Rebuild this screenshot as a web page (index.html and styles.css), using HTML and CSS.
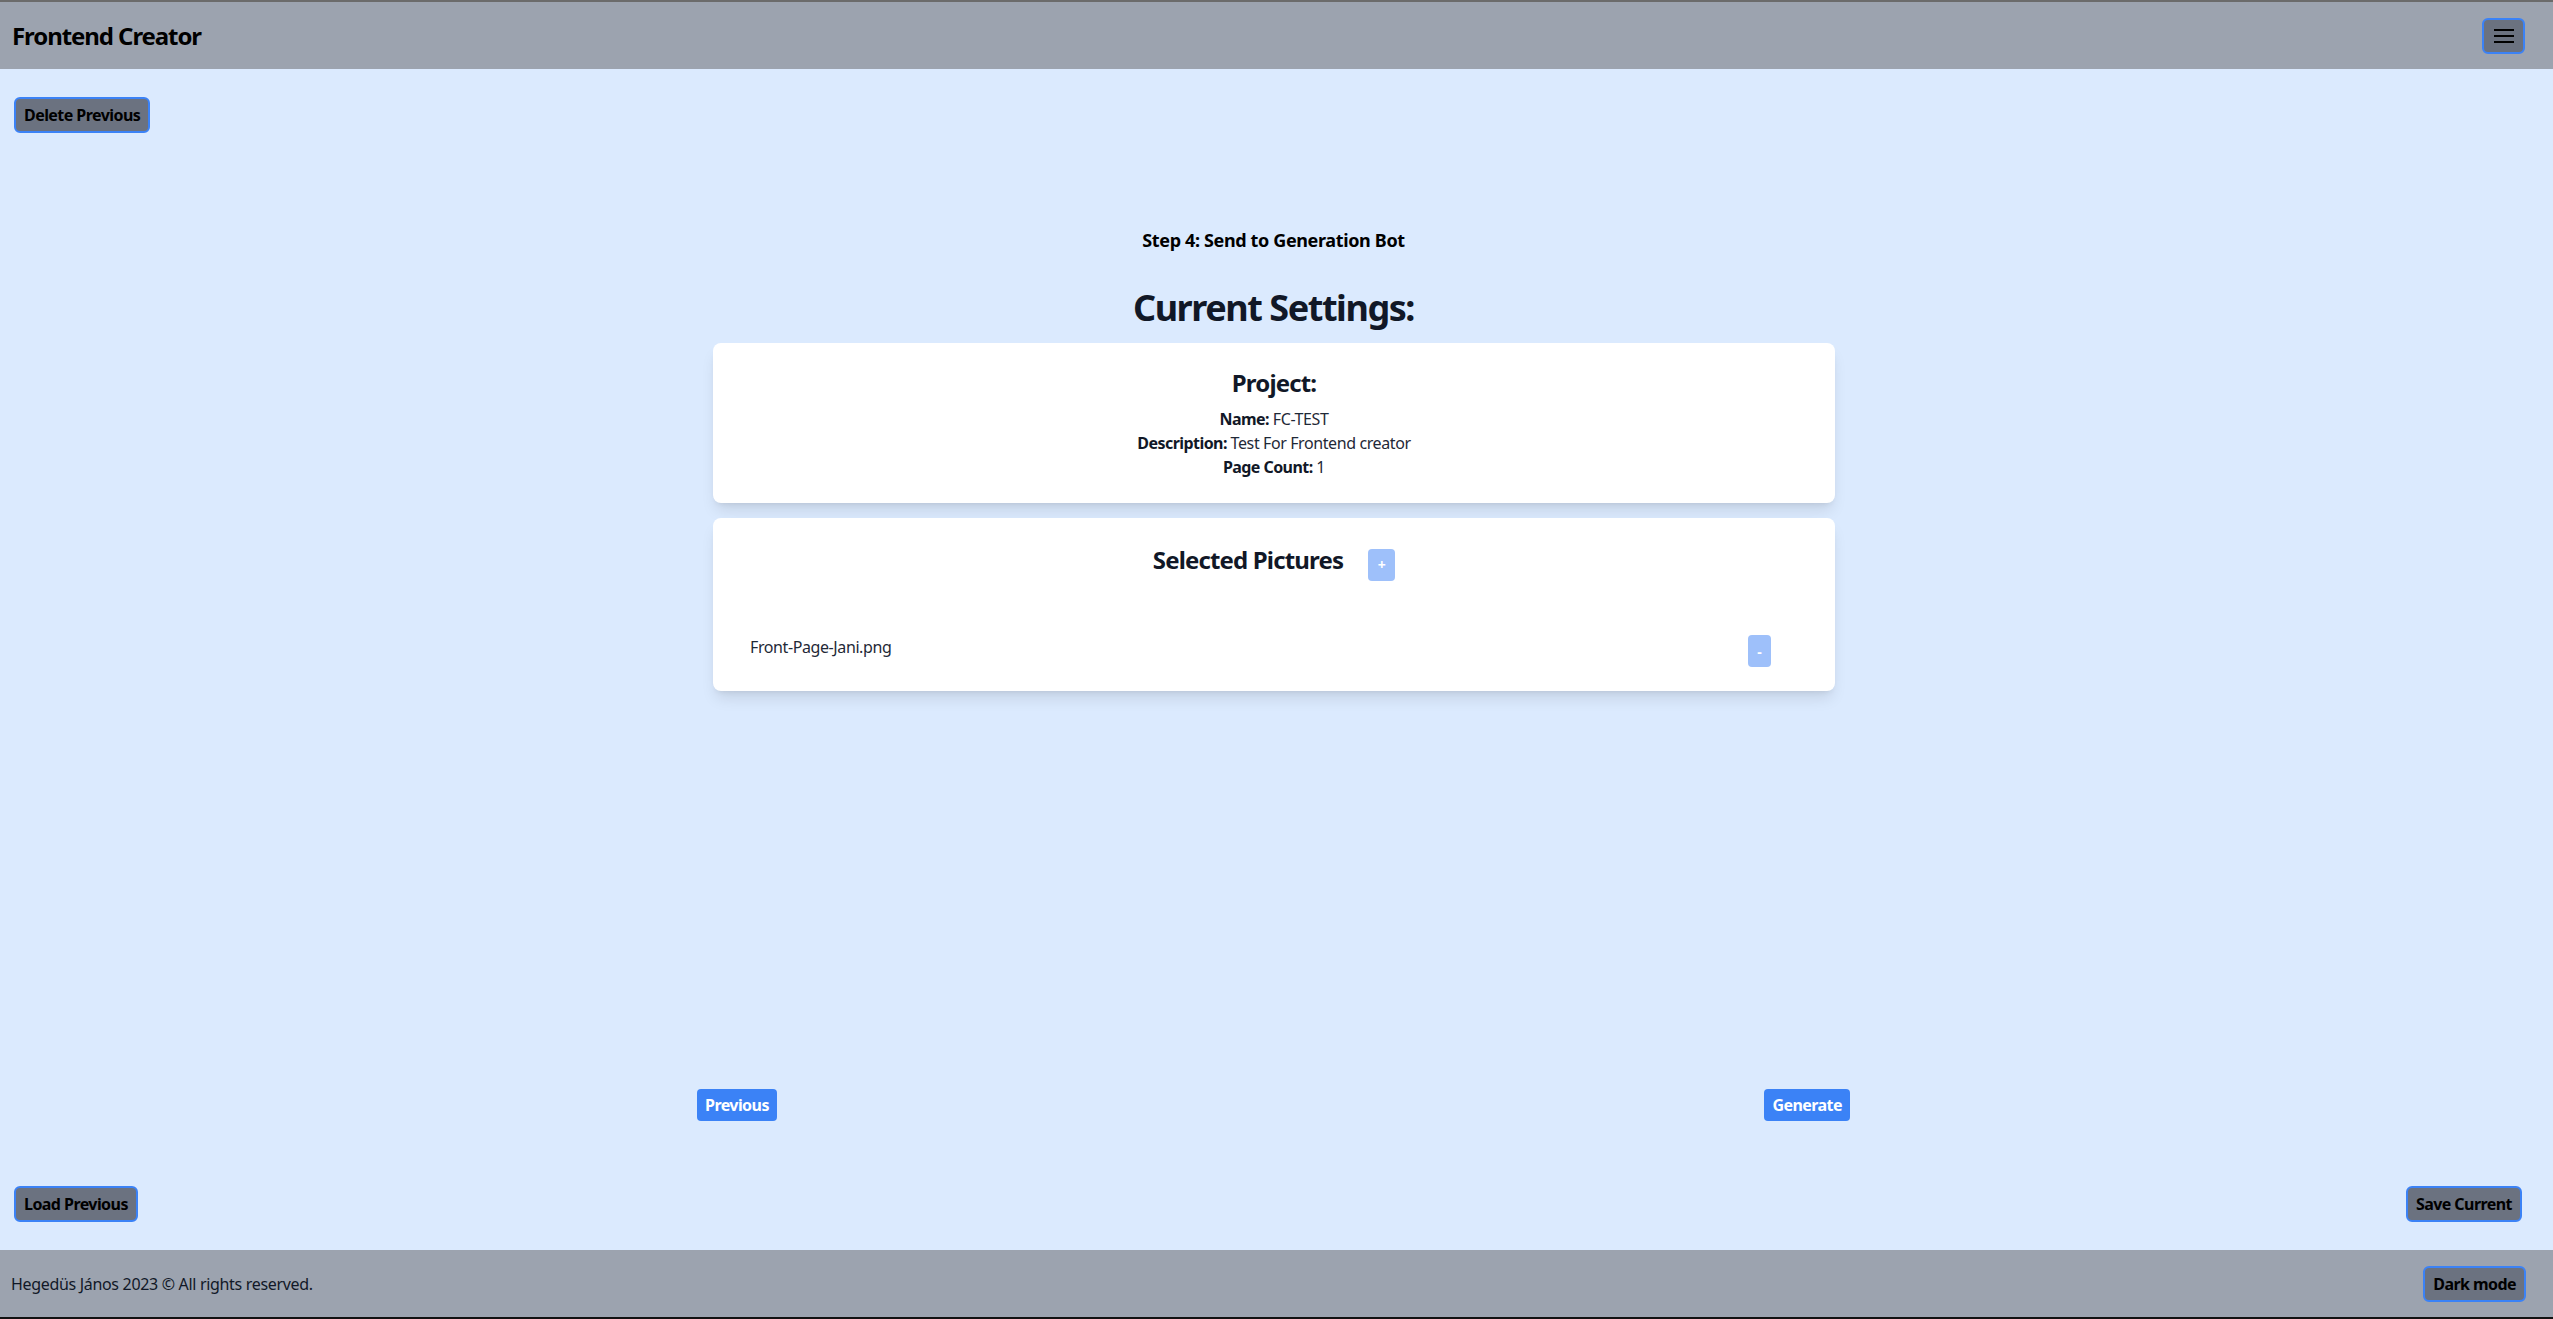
FILE: index.html
```html
<!DOCTYPE html>
<html lang="en">
<head>
<meta charset="utf-8">
<title>Frontend Creator</title>
<link rel="stylesheet" href="styles.css">
</head>
<body>
<header class="topbar">
  <h1 class="brand">Frontend Creator</h1>
  <button class="menu-btn" aria-label="Menu">
    <svg width="20" height="14" viewBox="0 0 20 14"><path d="M0 1h20M0 7h20M0 13h20" stroke="#000" stroke-width="2" fill="none"/></svg>
  </button>
</header>
<main class="main">
  <div class="toolbar"><button class="ghost-btn">Delete Previous</button></div>
  <div class="stage">
    <section class="wizard">
      <h3 class="step">Step 4: Send to Generation Bot</h3>
      <h2 class="settings-title">Current Settings:</h2>
      <div class="card project-card">
        <h4 class="card-title">Project:</h4>
        <p class="info"><strong>Name:</strong> FC-TEST</p>
        <p class="info"><strong>Description:</strong> Test For Frontend creator</p>
        <p class="info"><strong>Page Count:</strong> 1</p>
      </div>
      <div class="card pictures-card">
        <div class="pictures-head">
          <h4 class="card-title">Selected Pictures</h4>
          <button class="mini-btn plus">+</button>
        </div>
        <ul class="pic-list">
          <li class="pic-row"><span class="pic-name">Front-Page-Jani.png</span><button class="mini-btn minus">-</button></li>
        </ul>
      </div>
    </section>
    <div class="wizard-nav">
      <button class="primary-btn">Previous</button>
      <button class="primary-btn">Generate</button>
    </div>
  </div>
  <div class="storage-row">
    <button class="ghost-btn">Load Previous</button>
    <button class="ghost-btn">Save Current</button>
  </div>
</main>
<footer class="footer">
  <span class="copy">Hegedüs János 2023 © All rights reserved.</span>
  <button class="ghost-btn">Dark mode</button>
</footer>
</body>
</html>
```

FILE: styles.css
```css
* { box-sizing: border-box; }
html, body { margin: 0; height: 100%; }
body {
  display: flex;
  flex-direction: column;
  background: #dbeafe;
  font-family: "Noto Sans", "Open Sans", sans-serif;
  color: #111827;
  letter-spacing: -0.025em;
}
button { font-family: inherit; cursor: pointer; }

.topbar {
  height: 69px;
  flex: none;
  border-top: 2px solid #6b6b6b;
  background: #9ca3af;
  display: flex;
  align-items: center;
  justify-content: space-between;
  padding: 0 28px 0 12px;
}
.brand { margin: 0; font-size: 24px; line-height: 32px; font-weight: 700; color: #000; letter-spacing: -0.045em; }
.menu-btn {
  width: 43px; height: 36px;
  border: 2px solid #3b82f6; border-radius: 6px;
  background: #6b7280;
  display: flex; align-items: center; justify-content: center;
  padding: 0;
}
.menu-btn svg { display: block; }

.ghost-btn {
  font-size: 16px; line-height: 24px; font-weight: 700;
  letter-spacing: -0.035em;
  padding: 4px 8px;
  border: 2px solid #3b82f6; border-radius: 6px;
  background: #6b7280; color: #000;
}
.primary-btn {
  font-size: 16px; line-height: 24px; font-weight: 700;
  letter-spacing: -0.035em;
  padding: 4px 8px;
  border: 0; border-radius: 4px;
  background: #3b82f6; color: #fff;
}

.main {
  flex: 1;
  display: flex;
  flex-direction: column;
  padding: 28px 31px 28px 14px;
}
.toolbar { display: flex; }

.stage {
  flex: 1;
  width: 1153px;
  margin-left: calc(50% - 571px);
  display: flex;
  flex-direction: column;
}
.wizard { margin-top: 93px; }
.step { margin: 0; font-size: 18px; line-height: 28px; font-weight: 700; text-align: center; color: #000; letter-spacing: -0.02em; }
.settings-title { margin: 34px 0 15px; font-size: 36px; line-height: 40px; font-weight: 700; text-align: center; color: #111827; letter-spacing: -0.04em; }

.card {
  margin: 0 15px 0 16px;
  background: #fff;
  border-radius: 8px;
  box-shadow: 0 10px 15px -3px rgba(0,0,0,.1), 0 4px 6px -4px rgba(0,0,0,.1);
  padding: 24px;
  text-align: center;
}
.card-title { margin: 0; font-size: 24px; line-height: 32px; font-weight: 700; color: #111827; letter-spacing: -0.035em; }
.project-card .card-title { margin-bottom: 8px; }
.info { margin: 0; font-size: 16px; line-height: 24px; color: #1f2937; }
.info strong { color: #111827; letter-spacing: -0.035em; }

.pictures-card { margin-top: 15px; }
.pictures-head { height: 45px; display: flex; align-items: center; justify-content: center; gap: 25px; }
.pictures-head .card-title { margin-bottom: 10px; }
.mini-btn {
  height: 32px; padding: 0;
  border: 0; border-radius: 4px;
  background: #9ec0fa; color: #fff;
  font-size: 14px; font-weight: 700;
}
.plus { width: 27px; }
.minus { width: 23px; }
.pic-list { list-style: none; margin: 48px 0 0; padding: 0; }
.pic-row { display: flex; align-items: flex-start; justify-content: space-between; padding: 0 40px 0 13px; height: 32px; }
.pic-name { font-size: 16px; line-height: 24px; color: #1f2937; }

.wizard-nav { margin-top: auto; display: flex; justify-content: space-between; }
.storage-row { margin-top: 65px; display: flex; justify-content: space-between; }

.footer {
  height: 69px;
  flex: none;
  border-bottom: 2px solid #111;
  background: #9ca3af;
  display: flex;
  align-items: center;
  justify-content: space-between;
  padding: 0 27px 0 11px;
}
.copy { font-size: 16px; color: #111827; letter-spacing: -0.02em; }
```
